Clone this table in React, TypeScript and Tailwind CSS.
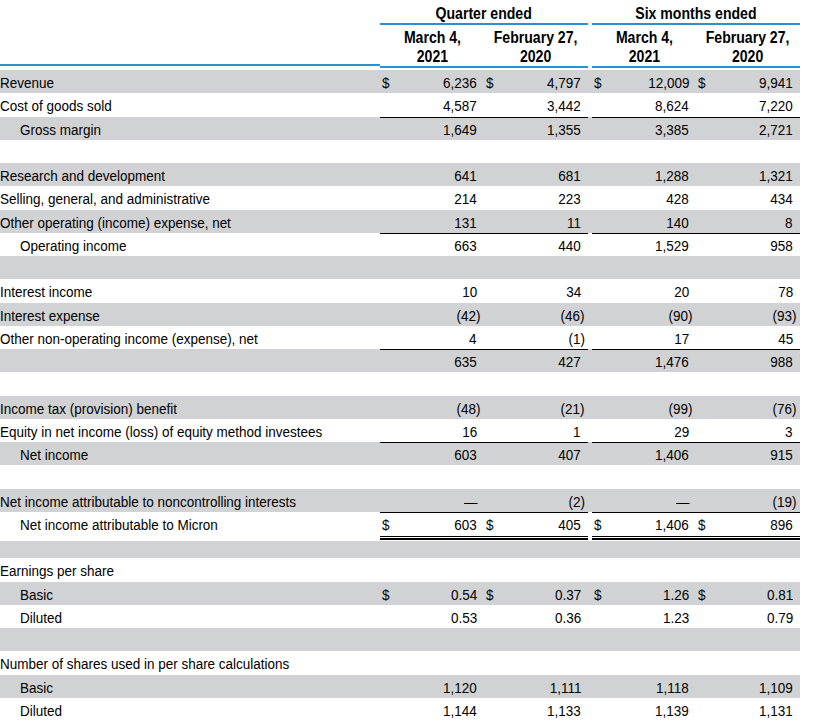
import React from 'react';

type Line = {
  label: string;
  indent?: boolean;
  dollar?: boolean;
  rule?: boolean;
  double?: boolean;
  vals?: string[];
};

const rows: Line[] = [
  { label: 'Revenue', dollar: true, vals: ['6,236', '4,797', '12,009', '9,941'] },
  { label: 'Cost of goods sold', vals: ['4,587', '3,442', '8,624', '7,220'] },
  { label: 'Gross margin', indent: true, rule: true, vals: ['1,649', '1,355', '3,385', '2,721'] },
  { label: '' },
  { label: 'Research and development', vals: ['641', '681', '1,288', '1,321'] },
  { label: 'Selling, general, and administrative', vals: ['214', '223', '428', '434'] },
  { label: 'Other operating (income) expense, net', vals: ['131', '11', '140', '8'] },
  { label: 'Operating income', indent: true, rule: true, vals: ['663', '440', '1,529', '958'] },
  { label: '' },
  { label: 'Interest income', vals: ['10', '34', '20', '78'] },
  { label: 'Interest expense', vals: ['(42)', '(46)', '(90)', '(93)'] },
  { label: 'Other non-operating income (expense), net', vals: ['4', '(1)', '17', '45'] },
  { label: '', rule: true, vals: ['635', '427', '1,476', '988'] },
  { label: '' },
  { label: 'Income tax (provision) benefit', vals: ['(48)', '(21)', '(99)', '(76)'] },
  { label: 'Equity in net income (loss) of equity method investees', vals: ['16', '1', '29', '3'] },
  { label: 'Net income', indent: true, rule: true, vals: ['603', '407', '1,406', '915'] },
  { label: '' },
  { label: 'Net income attributable to noncontrolling interests', vals: ['—', '(2)', '—', '(19)'] },
  { label: 'Net income attributable to Micron', indent: true, rule: true, dollar: true, vals: ['603', '405', '1,406', '896'] },
  { label: '', double: true },
  { label: 'Earnings per share' },
  { label: 'Basic', indent: true, dollar: true, vals: ['0.54', '0.37', '1.26', '0.81'] },
  { label: 'Diluted', indent: true, vals: ['0.53', '0.36', '1.23', '0.79'] },
  { label: '' },
  { label: 'Number of shares used in per share calculations' },
  { label: 'Basic', indent: true, vals: ['1,120', '1,111', '1,118', '1,109'] },
  { label: 'Diluted', indent: true, vals: ['1,144', '1,133', '1,139', '1,131'] },
];

function Cell({ value, dollar }: { value?: string; dollar?: boolean }) {
  const neg = value?.startsWith('(');
  return (
    <div className="flex h-full w-[104px] justify-between pl-[2px] pr-[7px] pt-[2px] leading-[21px]">
      <span className="inline-block origin-left scale-x-[0.87]">{dollar ? '$' : ''}</span>
      {value && (
        <span className={`inline-block origin-right scale-x-[0.87] ${neg ? '-mr-[4px]' : ''}`}>{value}</span>
      )}
    </div>
  );
}

function Group({ vals, dollar, rule, idx }: { vals?: string[]; dollar?: boolean; rule?: boolean; idx: number }) {
  return (
    <div className={`flex h-full w-[208px] ${rule ? 'shadow-[inset_0_1px_0_#000]' : ''}`}>
      <Cell value={vals?.[idx]} dollar={dollar} />
      <Cell value={vals?.[idx + 1]} dollar={dollar} />
    </div>
  );
}

function Row({ r, i }: { r: Line; i: number }) {
  const bg = i % 2 === 0 ? 'bg-[#d1d2d4]' : 'bg-white';
  if (r.double) {
    return (
      <div className="flex h-[23.26px] w-[800px] flex-col">
        <div className="flex h-[6px] bg-white pt-[1px]">
          <div className="w-[380px]" />
          <div className="flex w-[208px] flex-col">
            <div className="h-[1px] bg-black" />
            <div className="mt-[1px] h-[2px] bg-black" />
          </div>
          <div className="w-[4px]" />
          <div className="flex w-[208px] flex-col">
            <div className="h-[1px] bg-black" />
            <div className="mt-[1px] h-[2px] bg-black" />
          </div>
        </div>
        <div className={`flex-1 ${bg}`} />
      </div>
    );
  }
  return (
    <div className={`flex h-[23.26px] w-[800px] ${bg}`}>
      <div
        className={`w-[380px] shrink-0 whitespace-nowrap pt-[2px] leading-[21px] ${r.indent ? 'pl-[20px]' : 'pl-0'}`}
      >
        <span className="inline-block origin-left scale-x-[0.87]">{r.label}</span>
      </div>
      <Group vals={r.vals} dollar={r.dollar} rule={r.rule} idx={0} />
      <div className="w-[4px]" />
      <Group vals={r.vals} dollar={r.dollar} rule={r.rule} idx={2} />
    </div>
  );
}

function HeaderGroup({ title }: { title: string }) {
  return (
    <div className="flex h-[66px] w-[208px] flex-col font-bold text-[16px]">
      <div className="h-[25px] border-b-2 border-[#2b8fd1] pt-[5px] text-center leading-[18px]">
        <span className="inline-block origin-center scale-x-[0.88]">{title}</span>
      </div>
      <div className="flex flex-1 border-b-2 border-[#2b8fd1]">
        <div className="w-[104px] pt-[2.5px] text-center leading-[19px]">
          <span className="inline-block origin-center scale-x-[0.88]">
            March 4,
            <br />
            2021
          </span>
        </div>
        <div className="w-[104px] pt-[2.5px] text-center leading-[19px]">
          <span className="inline-block origin-center scale-x-[0.88]">
            February 27,
            <br />
            2020
          </span>
        </div>
      </div>
    </div>
  );
}

export default function App() {
  return (
    <div
      className="min-h-screen bg-white text-[15.5px] text-black"
      style={{ fontFamily: '"Liberation Sans", Arial, sans-serif' }}
    >
      {/* Column headers */}
      <div className="flex h-[70px] w-[800px]">
        <div className="h-[66px] w-[380px] border-b-2 border-[#2b8fd1]" />
        <HeaderGroup title="Quarter ended" />
        <div className="w-[4px]" />
        <HeaderGroup title="Six months ended" />
      </div>

      {/* Statement lines */}
      <div className="flex flex-col">
        {rows.map((r, i) => (
          <Row key={i} r={r} i={i} />
        ))}
      </div>
    </div>
  );
}
